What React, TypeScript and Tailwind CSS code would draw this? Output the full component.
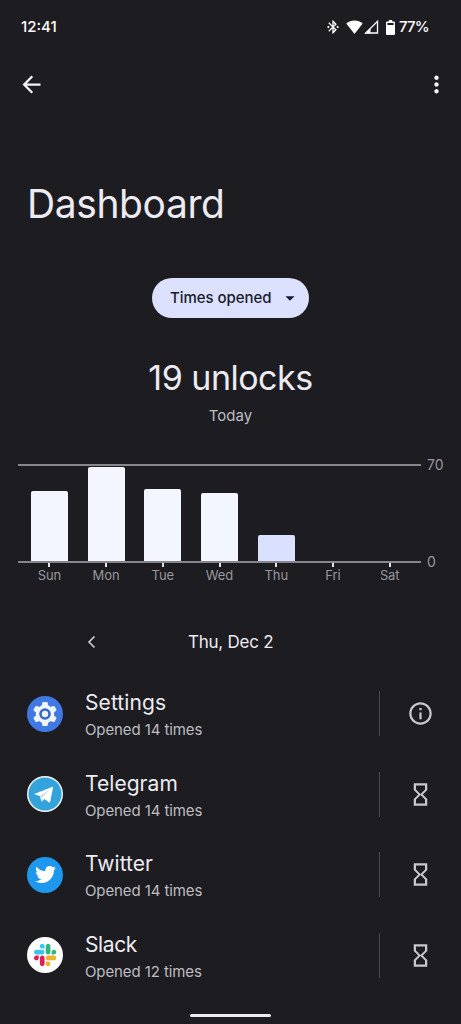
import type { ReactNode } from 'react';
import {
  MdArrowBack,
  MdArrowDropDown,
  MdBluetoothConnected,
  MdHourglassEmpty,
  MdInfoOutline,
  MdMoreVert,
} from 'react-icons/md';
import { FaTwitter } from 'react-icons/fa';

interface Day {
  label: string;
  height: number;
  today?: boolean;
}

interface AppUsage {
  name: string;
  times: number;
  nameClass: string;
  icon: ReactNode;
  system?: boolean;
}

const days: Day[] = [
  { label: 'Sun', height: 70 },
  { label: 'Mon', height: 94 },
  { label: 'Tue', height: 72 },
  { label: 'Wed', height: 68 },
  { label: 'Thu', height: 26, today: true },
  { label: 'Fri', height: 0 },
  { label: 'Sat', height: 0 },
];

const apps: AppUsage[] = [
  { name: 'Settings', times: 14, nameClass: 'tracking-[0.1px]', icon: <SettingsLogo />, system: true },
  { name: 'Telegram', times: 14, nameClass: 'tracking-[0.05px]', icon: <TelegramLogo /> },
  { name: 'Twitter', times: 14, nameClass: 'tracking-[0.05px]', icon: <TwitterLogo /> },
  { name: 'Slack', times: 12, nameClass: 'tracking-[-0.4px]', icon: <SlackLogo /> },
];

export default function App() {
  return (
    <div className="flex h-[1024px] w-[461px] flex-col overflow-hidden bg-[#1d1c21] font-['Inter',sans-serif] text-[#ecebf1]">
      <StatusBar />

      {/* Toolbar */}
      <header className="flex h-[60px] items-center justify-between pr-[11px] pl-[18px] text-[#f5f5f7]">
        <button aria-label="Back">
          <MdArrowBack size={27} />
        </button>
        <button aria-label="More options">
          <MdMoreVert size={27} />
        </button>
      </header>

      <h1 className="mt-[60px] pl-[27px] text-[39px] leading-[60px] font-normal tracking-[-0.4px]">Dashboard</h1>

      <div className="mt-[44px] flex flex-col items-center">
        <button className="flex h-10 w-[157px] items-center justify-between rounded-full bg-[#dbe1ff] pr-2 pl-[18px] text-[15px] font-medium text-[#191b2c]">
          <span className="tracking-[-0.05px]">Times opened</span>
          <MdArrowDropDown size={22} />
        </button>
        <p className="mt-10 text-[34px] leading-[40px] font-normal tracking-[-0.5px]">19 unlocks</p>
        <p className="mt-2 text-[15px] leading-5 text-[#bdbcc2]">Today</p>
      </div>

      <Chart />

      {/* Date picker */}
      <div className="mt-11 flex h-[30px] items-center pl-[86px]">
        <svg width="11" height="14" viewBox="0 0 11 14" fill="none" stroke="#d2d1d6" strokeWidth="1.6">
          <path d="M8.5 1.5L3 7l5.5 5.5" />
        </svg>
        <span className="mt-0.5 ml-[91px] text-[17px] tracking-[-0.25px]">Thu, Dec 2</span>
      </div>

      <ul className="mt-[16.3px]">
        {apps.map((app) => (
          <AppRow key={app.name} app={app} />
        ))}
      </ul>

      <div className="mx-auto mt-[18.7px] h-[3px] w-[81px] rounded-full bg-[#ecebee]" />
    </div>
  );
}

function StatusBar() {
  return (
    <div className="flex h-[54px] items-center justify-between pr-8 pl-[21px] text-[15px] font-medium text-white">
      <span>12:41</span>
      <div className="flex items-center">
        <MdBluetoothConnected size={16} />
        <svg className="ml-[5px]" width="17" height="14" viewBox="0 0 17 14" fill="currentColor">
          <path d="M8.5 14L.3 3.6C4.8-.7 12.2-.7 16.7 3.6z" />
        </svg>
        <svg className="ml-px" width="15" height="14" viewBox="0 0 15 14">
          <path d="M1.8 13H13.5V1.3z" fill="none" stroke="currentColor" strokeWidth="1.3" />
          <path d="M.6 13.6L6.5 7.7v5.9z" fill="currentColor" />
        </svg>
        <svg className="ml-[7px]" width="9" height="15" viewBox="0 0 9 15" fill="currentColor">
          <path fillRule="evenodd" d="M2.8 0h3.4v1.5H8q1 0 1 1V14q0 1-1 1H1q-1 0-1-1V2.5q0-1 1-1h1.8zM1.4 3v2h6.2V3z" />
        </svg>
        <span className="ml-1 tracking-[-0.75px]">77%</span>
      </div>
    </div>
  );
}

function Chart() {
  return (
    <div className="mt-[38px] flex text-[14px] text-[#98979d]">
      <div className="ml-[18px] w-[403px]">
        <div className="flex h-[99px] items-end border-y-2 border-[#86868b] px-[3px]">
          {days.map((day) => (
            <div key={day.label} className="flex flex-1 justify-center">
              <div
                className={day.today ? 'w-[37px] rounded-t-[2px] bg-[#dae0ff]' : 'w-[37px] rounded-t-[2px] bg-[#f4f6ff]'}
                style={{ height: day.height }}
              />
            </div>
          ))}
        </div>
        <div className="flex px-[3px] text-[13px]">
          {days.map((day) => (
            <div key={day.label} className="flex flex-1 flex-col items-center">
              <div className="h-1 w-0.5 bg-[#e4e4e8]" />
              <span className="leading-4 tracking-[-0.1px]">{day.label}</span>
            </div>
          ))}
        </div>
      </div>
      <div className="-mt-[9px] ml-1.5 flex h-[117px] flex-col justify-between leading-[20px]">
        <span>70</span>
        <span>0</span>
      </div>
    </div>
  );
}

function AppRow({ app }: { app: AppUsage }) {
  return (
    <li className="flex h-[80.6px] items-center pl-[27px]">
      {app.icon}
      <div className="ml-[22px] w-[294px] pt-[5px]">
        <p className={`text-[21px] leading-7 ${app.nameClass}`}>{app.name}</p>
        <p className="text-[15px] leading-[26px] tracking-[-0.1px] text-[#bdbcc2]">Opened {app.times} times</p>
      </div>
      <div className="h-[45px] w-px bg-[#49484e]" />
      <div className="flex flex-1 justify-center text-[#c9c8cf]">
        {app.system ? <MdInfoOutline size={27} /> : <MdHourglassEmpty size={27} />}
      </div>
    </li>
  );
}

function SettingsLogo() {
  return (
    <svg width="36" height="36" viewBox="0 0 36 36">
      <circle cx="18" cy="18" r="18" fill="#4079e3" />
      <g fill="#f0f4ff">
        <circle cx="18" cy="18" r="9.2" />
        {[0, 60, 120].map((angle) => (
          <path
            key={angle}
            d="M15.3 6.8q.2-.9 1.1-.9h3.2q.9 0 1.1.9l.8 4v14.4l-.8 4q-.2.9-1.1.9h-3.2q-.9 0-1.1-.9l-.8-4V10.8z"
            transform={`rotate(${angle} 18 18)`}
          />
        ))}
      </g>
      <circle cx="18" cy="18" r="4.5" fill="none" stroke="#3567c9" strokeWidth="2.6" />
    </svg>
  );
}

function TelegramLogo() {
  return (
    <svg width="36" height="36" viewBox="0 0 36 36">
      <circle cx="18" cy="18" r="18" fill="#f4fafd" />
      <circle cx="18" cy="18" r="16.6" fill="#34a3dc" />
      <path d="M7.8 17.7L25 10.9q1.2-.4 1 .9l-2.8 14q-.3 1.2-1.4.5l-4.4-3.3-2.2 2.2q-.7.6-.9-.4l-1.5-4.9-4.9-1.3q-.9-.4-.1-.9z" fill="#fff" />
      <path d="M12.8 19.9l9.6-6.1-7.5 7.7-.6 3.5z" fill="#c5dfee" />
    </svg>
  );
}

function TwitterLogo() {
  return (
    <div className="flex size-9 items-center justify-center rounded-full bg-[#1d98ee] text-white">
      <FaTwitter size={21} />
    </div>
  );
}

function SlackLogo() {
  return (
    <svg width="36" height="36" viewBox="0 0 36 36">
      <circle cx="18" cy="18" r="18" fill="#fff" />
      <g transform="translate(6.7 6.7) scale(.184)">
        <path fill="#e01e5a" d="M27.2 77.3c0 7-5.7 12.7-12.7 12.7S1.8 84.3 1.8 77.3s5.7-12.7 12.7-12.7h12.7zM33.6 77.3c0-7 5.7-12.7 12.7-12.7S59 70.3 59 77.3V109c0 7-5.7 12.7-12.7 12.7s-12.7-5.7-12.7-12.7z" />
        <path fill="#36c5f0" d="M46.3 26.2c-7 0-12.7-5.7-12.7-12.7S39.3.8 46.3.8 59 6.5 59 13.5v12.7zM46.3 32.7c7 0 12.7 5.7 12.7 12.7s-5.7 12.7-12.7 12.7H14.5C7.5 58.1 1.8 52.4 1.8 45.4s5.7-12.7 12.7-12.7z" />
        <path fill="#2eb67d" d="M97.2 45.4c0-7 5.7-12.7 12.7-12.7s12.7 5.7 12.7 12.7-5.7 12.7-12.7 12.7H97.2zM90.9 45.4c0 7-5.7 12.7-12.7 12.7s-12.7-5.7-12.7-12.7V13.5c0-7 5.7-12.7 12.7-12.7s12.7 5.7 12.7 12.7z" />
        <path fill="#ecb22e" d="M78.2 96.3c7 0 12.7 5.7 12.7 12.7s-5.7 12.7-12.7 12.7-12.7-5.7-12.7-12.7V96.3zM78.2 89.9c-7 0-12.7-5.7-12.7-12.7s5.7-12.7 12.7-12.7H110c7 0 12.7 5.7 12.7 12.7s-5.7 12.7-12.7 12.7z" />
      </g>
    </svg>
  );
}
